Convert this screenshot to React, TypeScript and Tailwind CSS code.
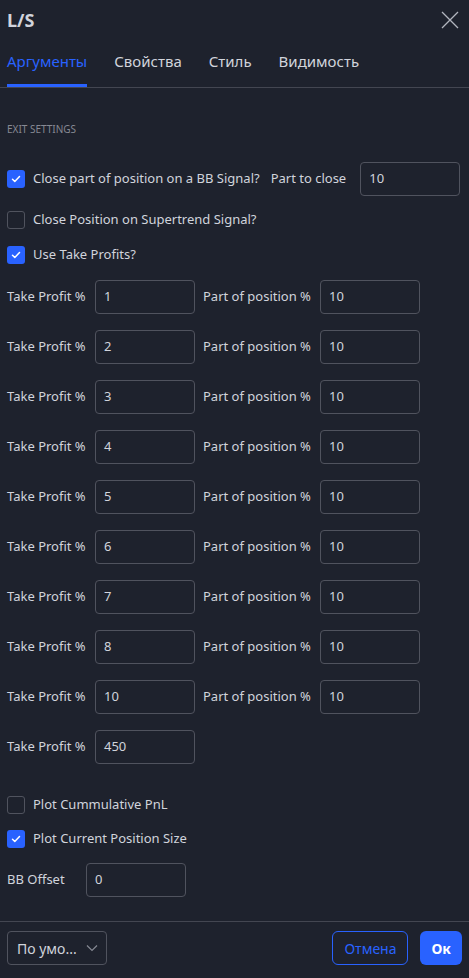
import { useState } from 'react';

const tps = ['1', '2', '3', '4', '5', '6', '7', '8', '10'];

function Check({ on }: { on: boolean }) {
  return on ? (
    <span className="flex h-[18px] w-[18px] shrink-0 items-center justify-center rounded-[3px] bg-[#2962ff]">
      <svg width="12" height="12" viewBox="0 0 12 12" fill="none">
        <path d="M2.5 6.2l2.3 2.3 4.7-5" stroke="#fff" strokeWidth="1.5" strokeLinecap="round" strokeLinejoin="round" />
      </svg>
    </span>
  ) : (
    <span className="h-[18px] w-[18px] shrink-0 rounded-[3px] border border-[#50535e]" />
  );
}

function Field({ value, w = 'w-[100px]' }: { value: string; w?: string }) {
  return (
    <div className={`flex h-[34px] ${w} items-center rounded-[4px] border border-[#50535e] px-[8px] text-[13px] text-[#d1d4dc]`}>
      {value}
    </div>
  );
}

export default function App() {
  const [tab] = useState(0);
  const tabs = ['Аргументы', 'Свойства', 'Стиль', 'Видимость'];

  return (
    <div className="flex h-[978px] w-[469px] flex-col bg-[#1e222d] text-[13px] text-[#d1d4dc]" style={{ fontFamily: '"Noto Sans", Roboto, sans-serif' }}>
      <div className="flex h-[40px] items-center justify-between pl-[7px] pr-[10px]">
        <span className="text-[18px] font-bold text-[#d1d4dc]">L/S</span>
        <svg width="18" height="18" viewBox="0 0 18 18" fill="none">
          <path d="M1 1l16 16M17 1L1 17" stroke="#b2b5be" strokeWidth="1.3" />
        </svg>
      </div>
      <div className="flex h-[48px] items-end gap-[27px] border-b border-[#434651] px-[7px]">
        {tabs.map((t, i) => (
          <div key={t} className={`flex h-full flex-col justify-center text-[15px] ${i === tab ? 'text-[#2962ff]' : 'text-[#d1d4dc]'}`}>
            <span className="mt-[4px] flex-1 pt-[6px]">{t}</span>
            <span className={`h-[3px] w-full ${i === tab ? 'bg-[#2962ff]' : ''}`} />
          </div>
        ))}
      </div>

      <div className="flex flex-1 flex-col px-[7px]">
        <div className="pt-[34px] text-[10px] uppercase text-[#868993]">Exit Settings</div>

        <div className="mt-[25px] flex h-[34px] items-center">
          <Check on />
          <span className="ml-[8px]">Close part of position on a BB Signal?</span>
          <span className="ml-[11px] mr-[14px]">Part to close</span>
          <Field value="10" />
        </div>
        <div className="mt-[15px] flex h-[18px] items-center">
          <Check on={false} />
          <span className="ml-[8px]">Close Position on Supertrend Signal?</span>
        </div>
        <div className="mt-[17px] flex h-[18px] items-center">
          <Check on />
          <span className="ml-[8px]">Use Take Profits?</span>
        </div>

        <div className="mt-[16px] flex flex-col gap-[16px]">
          {tps.map((v, i) => (
            <div key={i} className="flex items-center">
              <span className="w-[88px]">Take Profit %</span>
              <Field value={v} />
              <span className="ml-[8px] w-[117px]">Part of position %</span>
              <Field value="10" />
            </div>
          ))}
          <div className="flex items-center">
            <span className="w-[88px]">Take Profit %</span>
            <Field value="450" />
          </div>
        </div>

        <div className="mt-[32px] flex h-[18px] items-center">
          <Check on={false} />
          <span className="ml-[8px]">Plot Cummulative PnL</span>
        </div>
        <div className="mt-[16px] flex h-[18px] items-center">
          <Check on />
          <span className="ml-[8px]">Plot Current Position Size</span>
        </div>
        <div className="mt-[15px] flex items-center">
          <span className="w-[79px]">BB Offset</span>
          <Field value="0" />
        </div>
      </div>

      <div className="flex h-[57px] items-center justify-between border-t border-[#434651] px-[7px] pb-[4px]">
        <div className="flex h-[34px] w-[100px] items-center justify-between rounded-[4px] border border-[#50535e] pl-[9px] pr-[8px] text-[14px]">
          <span>По умо...</span>
          <svg width="12" height="8" viewBox="0 0 12 8" fill="none">
            <path d="M1 1.5l5 5 5-5" stroke="#868993" strokeWidth="1.2" />
          </svg>
        </div>
        <div className="flex gap-[12px]">
          <div className="flex h-[34px] items-center rounded-[6px] border border-[#2962ff] px-[11px] text-[14px] text-[#2962ff]">Отмена</div>
          <div className="flex h-[34px] items-center rounded-[6px] bg-[#2962ff] px-[11px] text-[14px] font-bold text-white">Ок</div>
        </div>
      </div>
    </div>
  );
}
